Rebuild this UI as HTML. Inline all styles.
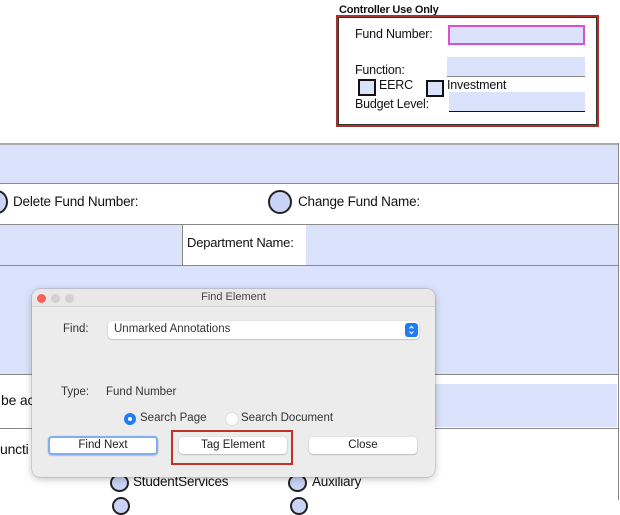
<!DOCTYPE html>
<html><head><meta charset="utf-8"><style>
*{margin:0;padding:0;box-sizing:border-box}
body{width:620px;height:500px;overflow:hidden;background:#fff;position:relative;font-family:"Liberation Sans",sans-serif;color:#111}
.a{position:absolute}
.blue{background:#dbe2fb}
.hl{position:absolute;height:1px;background:#8a8a8a;left:0;width:619px}
.t{position:absolute;font-size:13px;white-space:nowrap;letter-spacing:-0.2px}
.rad{position:absolute;border:2px solid #222;border-radius:50%;background:#c9d3f5}
.d{font-size:11.5px;color:#333;position:absolute;white-space:nowrap}
.btn{position:absolute;height:17px;background:#fff;border-radius:4px;box-shadow:0 0.5px 1.5px rgba(0,0,0,.35);font-size:11.5px;color:#222;text-align:center;line-height:17px}
</style></head><body>
<div class="t" style="left:339px;top:4px;font-size:11px;font-weight:bold">Controller Use Only</div>
<div class="a" style="left:336px;top:15px;width:263px;height:112px;border:2.5px solid #a8322a;box-shadow:inset 0 0 0 1px #333"></div>
<div class="t" style="left:355px;top:27px;font-size:12.5px">Fund Number:</div>
<div class="a blue" style="left:448px;top:25px;width:137px;height:20px;border:2px solid #d84fd8"></div>
<div class="t" style="left:355px;top:63px;font-size:12.5px">Function:</div>
<div class="a blue" style="left:447px;top:57px;width:138px;height:20px;border-bottom:1px solid #888"></div>
<div class="a blue" style="left:358px;top:79px;width:18px;height:17px;border:2px solid #111"></div>
<div class="t" style="left:379px;top:78px;font-size:12.5px">EERC</div>
<div class="a blue" style="left:426px;top:80px;width:18px;height:17px;border:2px solid #111"></div>
<div class="t" style="left:447px;top:78px;font-size:12.5px">Investment</div>
<div class="t" style="left:355px;top:97px;font-size:12.5px">Budget Level:</div>
<div class="a blue" style="left:449px;top:92px;width:136px;height:20px;border-bottom:1px solid #111"></div>

<div class="a blue" style="left:0;top:143px;width:618px;height:40px"></div>
<div class="hl" style="top:143px;height:2px;background:#aaa"></div>
<div class="hl" style="top:183px"></div>
<div class="rad" style="left:-14px;top:190px;width:22px;height:24px"></div>
<div class="t" style="left:13px;top:194px;font-size:13.5px">Delete Fund Number:</div>
<div class="rad" style="left:268px;top:190px;width:24px;height:24px"></div>
<div class="t" style="left:298px;top:194px;font-size:13.5px">Change Fund Name:</div>
<div class="hl" style="top:224px"></div>
<div class="a blue" style="left:0;top:225px;width:182px;height:40px"></div>
<div class="a" style="left:182px;top:225px;width:1px;height:40px;background:#888"></div>
<div class="t" style="left:187px;top:235px">Department Name:</div>
<div class="a blue" style="left:306px;top:225px;width:312px;height:40px"></div>
<div class="hl" style="top:265px"></div>
<div class="a blue" style="left:0;top:266px;width:618px;height:108px"></div>
<div class="hl" style="top:374px"></div>
<div class="a blue" style="left:150px;top:384px;width:467px;height:43px"></div>
<div class="t" style="left:1px;top:392px;font-size:14px">be ac</div>
<div class="hl" style="top:428px"></div>
<div class="a" style="left:618px;top:143px;width:1px;height:357px;background:#888"></div>
<div class="t" style="left:0;top:441px;font-size:14px">uncti</div>
<div class="rad" style="left:110px;top:474px;width:19px;height:18px"></div>
<div class="t" style="left:133px;top:474px;font-size:13.5px">StudentServices</div>
<div class="rad" style="left:288px;top:474px;width:19px;height:18px"></div>
<div class="t" style="left:312px;top:474px;font-size:13.5px">Auxiliary</div>
<div class="rad" style="left:112px;top:497px;width:18px;height:18px"></div>
<div class="rad" style="left:290px;top:497px;width:18px;height:18px"></div>

<div class="a" style="left:32px;top:289px;width:403px;height:188px;background:#ececec;border-radius:8px;box-shadow:0 2px 8px rgba(0,0,0,.25),0 0 0 0.5px rgba(0,0,0,.2);overflow:hidden">
 <div class="a" style="left:0;top:0;width:403px;height:18px;background:#eae8e6;border-bottom:1px solid #d0d0d0"></div>
 <div class="a" style="left:5px;top:5px;width:9px;height:9px;border-radius:50%;background:#fc5f57"></div>
 <div class="a" style="left:19px;top:5px;width:9px;height:9px;border-radius:50%;background:#d1d1d1"></div>
 <div class="a" style="left:33px;top:5px;width:9px;height:9px;border-radius:50%;background:#d1d1d1"></div>
 <div class="d" style="left:0;width:403px;text-align:center;top:2px;font-size:11px;color:#444">Find Element</div>
 <div class="d" style="left:31px;top:34px">Find:</div>
 <div class="a" style="left:76px;top:32px;width:311px;height:18px;background:#fff;border-radius:4px;box-shadow:0 0.5px 1.5px rgba(0,0,0,.3)"></div>
 <div class="d" style="left:82px;top:34px">Unmarked Annotations</div>
 <svg class="a" style="left:373px;top:34px" width="13" height="14"><rect width="13" height="14" rx="3" fill="#1e7cf5"/><path d="M4.5 5.5L6.5 3.5L8.5 5.5M4.5 8.5L6.5 10.5L8.5 8.5" stroke="#fff" stroke-width="1.2" fill="none"/></svg>
 <div class="d" style="left:29px;top:97px">Type:</div>
 <div class="d" style="left:74px;top:97px">Fund Number</div>
 <div class="a" style="left:92px;top:124px;width:12px;height:12px;border-radius:50%;background:#1e7cf5"></div>
 <div class="a" style="left:96px;top:128px;width:4px;height:4px;border-radius:50%;background:#fff"></div>
 <div class="d" style="left:108px;top:123px">Search Page</div>
 <div class="a" style="left:194px;top:124px;width:12px;height:12px;border-radius:50%;background:#fff;box-shadow:0 0 1px rgba(0,0,0,.4)"></div>
 <div class="d" style="left:209px;top:123px">Search Document</div>
 <div class="btn" style="left:16px;top:147px;width:110px;height:19px;line-height:15px;border:2px solid #80aef5">Find Next</div>
 <div class="btn" style="left:147px;top:148px;width:108px">Tag Element</div>
 <div class="btn" style="left:277px;top:148px;width:108px">Close</div>
</div>
<div class="a" style="left:171px;top:430px;width:122px;height:35px;border:2px solid #c0322a"></div>
</body></html>
